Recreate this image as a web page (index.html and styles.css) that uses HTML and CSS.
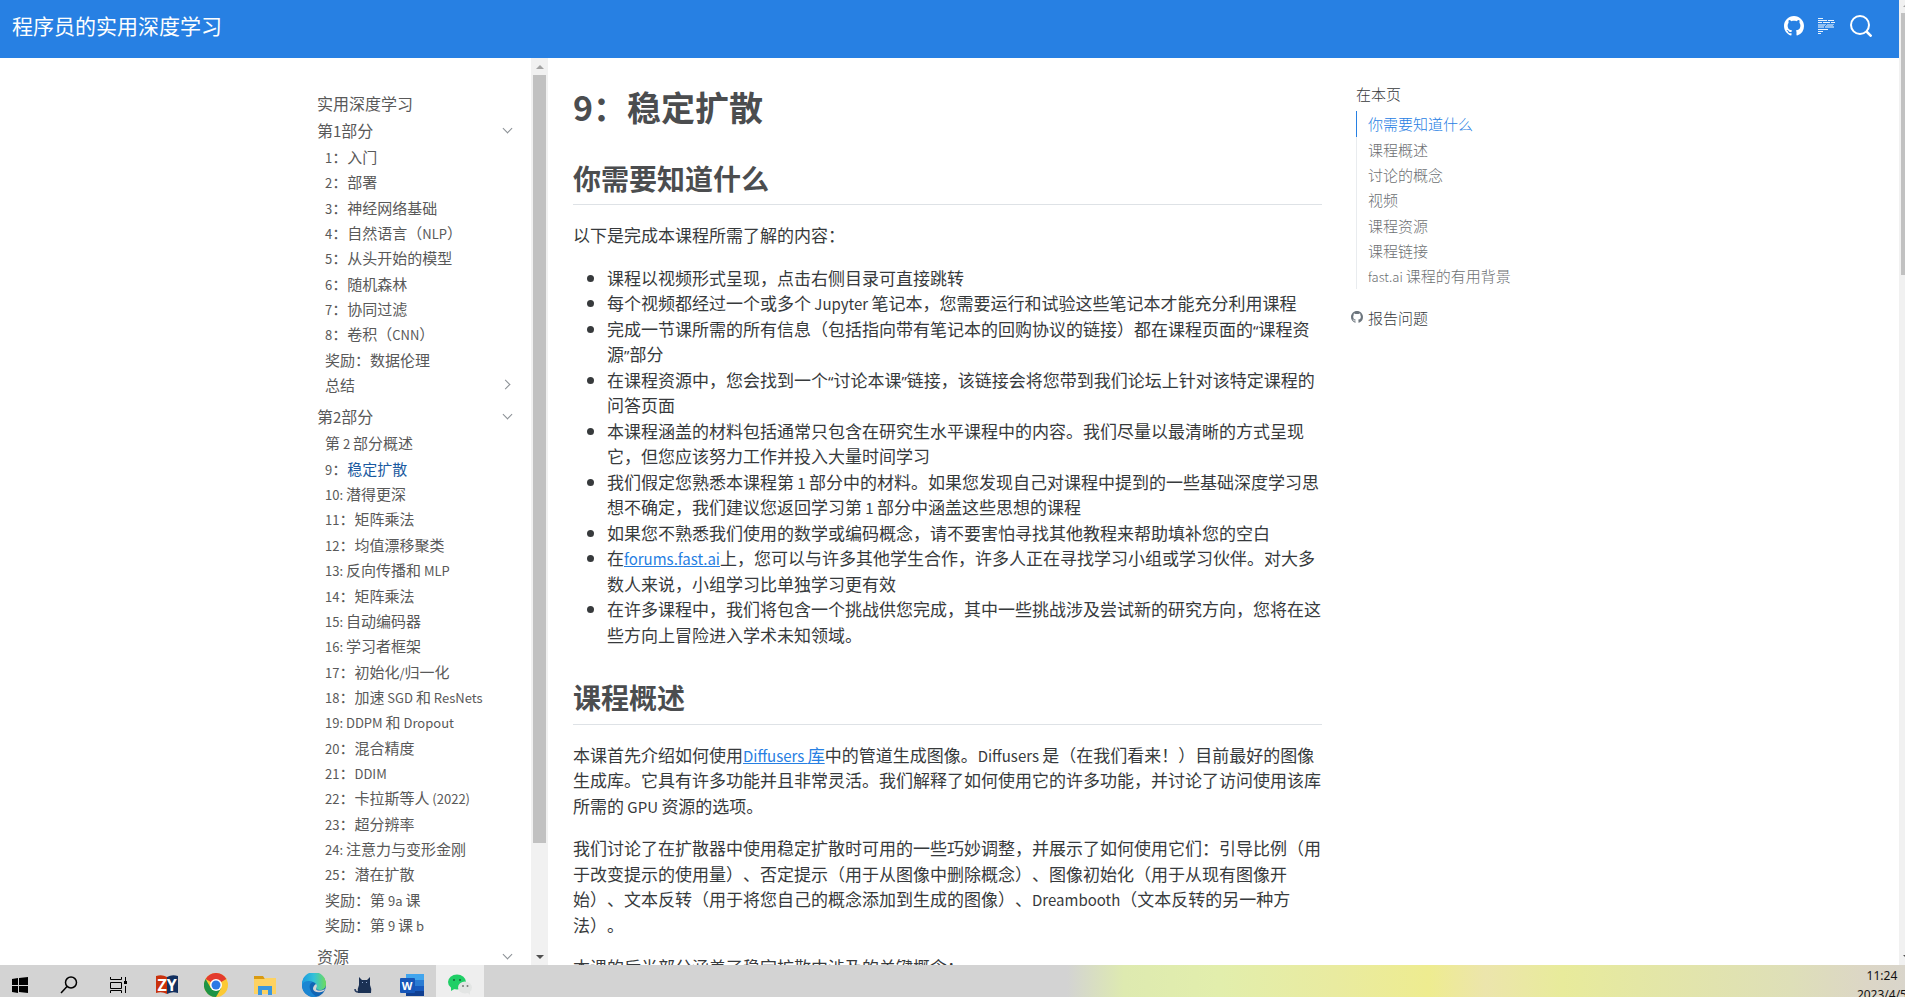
FILE: index.html
```html
<!DOCTYPE html>
<html lang="zh-CN">
<head>
<meta charset="utf-8">
<title>程序员的实用深度学习 - 9：稳定扩散</title>
<link rel="stylesheet" href="styles.css">
</head>
<body>
<div class="viewport">
<div class="page">
<header class="navbar">
  <a class="brand" href="#">程序员的实用深度学习</a>
  <nav class="tools">
    <a href="#" aria-label="GitHub"><svg width="20" height="20" viewBox="0 0 16 16" fill="#fff"><path d="M8 0C3.58 0 0 3.58 0 8c0 3.54 2.29 6.53 5.47 7.59.4.07.55-.17.55-.38 0-.19-.01-.82-.01-1.49-2.01.37-2.53-.49-2.69-.94-.09-.23-.48-.94-.82-1.13-.28-.15-.68-.52-.01-.53.63-.01 1.08.58 1.23.82.72 1.21 1.87.87 2.33.66.07-.52.28-.87.51-1.07-1.78-.2-3.64-.89-3.64-3.95 0-.87.31-1.59.82-2.15-.08-.2-.36-1.02.08-2.12 0 0 .67-.21 2.2.82.64-.18 1.32-.27 2-.27s1.36.09 2 .27c1.53-1.04 2.2-.82 2.2-.82.44 1.1.16 1.92.08 2.12.51.56.82 1.27.82 2.15 0 3.07-1.87 3.75-3.65 3.95.29.25.54.73.54 1.48 0 1.07-.01 1.93-.01 2.2 0 .21.15.46.55.38A8.01 8.01 0 0 0 16 8c0-4.42-3.58-8-8-8"/></svg></a>
    <a href="#" aria-label="论坛"><svg width="18" height="18" viewBox="0 0 18 18" fill="#fff"><path d="M0 1h5v1H0zM0 3h9v1H0zM10 3h6v1h-6zM0 5h4v1H0zM5 5h7v1H5zM13 5h4v1h-4zM0 12h10v1H0zM0 14h5v1H0zM0 16h3v1H0z" opacity=".9"/><path d="M0 7h8v1H0zM9 7h7v1H9zM0 8h7v1H0zM8 8h7v1H8zM0 9h6v2H0zM7 9h9v2H7z" opacity=".5"/></svg></a>
    <button type="button" aria-label="搜索"><svg width="22" height="22" viewBox="0 0 22 22" fill="none" stroke="#fff" stroke-width="2"><circle cx="10" cy="10" r="9"/><path d="M16.500 16.500 21.500 21.500" stroke-width="2.500"/></svg></button>
  </nav>
</header>
<div class="content">
  <nav class="sidebar">
    <div class="menu">
      <a class="top" href="#">实用深度学习</a>
      <button class="top" type="button"><span>第<span class="en">1</span>部分</span><i class="chev"></i></button>
      <ul>
        <li><a href="#"><span class="en">1</span>：入门</a></li>
        <li><a href="#"><span class="en">2</span>：部署</a></li>
        <li><a href="#"><span class="en">3</span>：神经网络基础</a></li>
        <li><a href="#"><span class="en">4</span>：自然语言（<span class="en">NLP</span>）</a></li>
        <li><a href="#"><span class="en">5</span>：从头开始的模型</a></li>
        <li><a href="#"><span class="en">6</span>：随机森林</a></li>
        <li><a href="#"><span class="en">7</span>：协同过滤</a></li>
        <li><a href="#"><span class="en">8</span>：卷积（<span class="en">CNN</span>）</a></li>
        <li><a href="#">奖励：数据伦理</a></li>
        <li><button type="button">总结<i class="chev right"></i></button></li>
      </ul>
      <button class="top" type="button"><span>第<span class="en">2</span>部分</span><i class="chev"></i></button>
      <ul>
        <li><a href="#">第<span class="en"> 2 </span>部分概述</a></li>
        <li><a href="#"><span class="en">9</span>：<span class="current">稳定扩散</span></a></li>
        <li><a href="#"><span class="en">10: </span>潜得更深</a></li>
        <li><a href="#"><span class="en">11</span>：矩阵乘法</a></li>
        <li><a href="#"><span class="en">12</span>：均值漂移聚类</a></li>
        <li><a href="#"><span class="en">13: </span>反向传播和<span class="en"> MLP</span></a></li>
        <li><a href="#"><span class="en">14</span>：矩阵乘法</a></li>
        <li><a href="#"><span class="en">15: </span>自动编码器</a></li>
        <li><a href="#"><span class="en">16: </span>学习者框架</a></li>
        <li><a href="#"><span class="en">17</span>：初始化<span class="en">/</span>归一化</a></li>
        <li><a href="#"><span class="en">18</span>：加速<span class="en"> SGD </span>和<span class="en"> ResNets</span></a></li>
        <li><a href="#"><span class="en">19: DDPM </span>和<span class="en"> Dropout</span></a></li>
        <li><a href="#"><span class="en">20</span>：混合精度</a></li>
        <li><a href="#"><span class="en">21</span>：<span class="en">DDIM</span></a></li>
        <li><a href="#"><span class="en">22</span>：卡拉斯等人<span class="en"> (2022)</span></a></li>
        <li><a href="#"><span class="en">23</span>：超分辨率</a></li>
        <li><a href="#"><span class="en">24: </span>注意力与变形金刚</a></li>
        <li><a href="#"><span class="en">25</span>：潜在扩散</a></li>
        <li><a href="#">奖励：第<span class="en"> 9a </span>课</a></li>
        <li><a href="#">奖励：第<span class="en"> 9 </span>课<span class="en"> b</span></a></li>
      </ul>
      <button class="top" type="button">资源<i class="chev"></i></button>
    </div>
    <div class="scrollbar"><i class="up"></i><div class="track"><div class="thumb long"></div></div><i class="down"></i></div>
  </nav>
  <main class="article">
    <h1>9：稳定扩散</h1>
    <h2>你需要知道什么</h2>
    <p>以下是完成本课程所需了解的内容：</p>
    <ul>
      <li>课程以视频形式呈现，点击右侧目录可直接跳转</li>
      <li>每个视频都经过一个或多个<span class="en"> Jupyter </span>笔记本，您需要运行和试验这些笔记本才能充分利用课程</li>
      <li>完成一节课所需的所有信息（包括指向带有笔记本的回购协议的链接）都在课程页面的<span class="quote">“</span>课程资源<span class="quote">”</span>部分</li>
      <li>在课程资源中，您会找到一个<span class="quote">“</span>讨论本课<span class="quote">”</span>链接，该链接会将您带到我们论坛上针对该特定课程的问答页面</li>
      <li>本课程涵盖的材料包括通常只包含在研究生水平课程中的内容。我们尽量以最清晰的方式呈现它，但您应该努力工作并投入大量时间学习</li>
      <li>我们假定您熟悉本课程第<span class="en"> 1 </span>部分中的材料。如果您发现自己对课程中提到的一些基础深度学习思想不确定，我们建议您返回学习第<span class="en"> 1 </span>部分中涵盖这些思想的课程</li>
      <li>如果您不熟悉我们使用的数学或编码概念，请不要害怕寻找其他教程来帮助填补您的空白</li>
      <li>在<a class="en" href="#">forums.fast.ai</a>上，您可以与许多其他学生合作，许多人正在寻找学习小组或学习伙伴。对大多数人来说，小组学习比单独学习更有效</li>
      <li>在许多课程中，我们将包含一个挑战供您完成，其中一些挑战涉及尝试新的研究方向，您将在这些方向上冒险进入学术未知领域。</li>
    </ul>
    <h2>课程概述</h2>
    <p>本课首先介绍如何使用<a href="#"><span class="en">Diffusers </span>库</a>中的管道生成图像。<span class="en">Diffusers </span>是（在我们看来！）目前最好的图像生成库。它具有许多功能并且非常灵活。我们解释了如何使用它的许多功能，并讨论了访问使用该库所需的<span class="en"> GPU </span>资源的选项。</p>
    <p>我们讨论了在扩散器中使用稳定扩散时可用的一些巧妙调整，并展示了如何使用它们：引导比例（用于改变提示的使用量）、否定提示（用于从图像中删除概念）、图像初始化（用于从现有图像开始）、文本反转（用于将您自己的概念添加到生成的图像）、<span class="en">Dreambooth</span>（文本反转的另一种方法）。</p>
    <p>本课的后半部分涵盖了稳定扩散中涉及的关键概念：</p>
  </main>
  <aside class="toc">
    <h3>在本页</h3>
    <ul>
      <li class="active"><a href="#">你需要知道什么</a></li>
      <li><a href="#">课程概述</a></li>
      <li><a href="#">讨论的概念</a></li>
      <li><a href="#">视频</a></li>
      <li><a href="#">课程资源</a></li>
      <li><a href="#">课程链接</a></li>
      <li><a href="#"><span class="en">fast.ai </span>课程的有用背景</a></li>
    </ul>
    <a class="report" href="#"><svg width="12" height="12" viewBox="0 0 16 16" fill="#6c757d"><path d="M8 0C3.58 0 0 3.58 0 8c0 3.54 2.29 6.53 5.47 7.59.4.07.55-.17.55-.38 0-.19-.01-.82-.01-1.49-2.01.37-2.53-.49-2.69-.94-.09-.23-.48-.94-.82-1.13-.28-.15-.68-.52-.01-.53.63-.01 1.08.58 1.23.82.72 1.21 1.87.87 2.33.66.07-.52.28-.87.51-1.07-1.78-.2-3.64-.89-3.64-3.95 0-.87.31-1.59.82-2.15-.08-.2-.36-1.02.08-2.12 0 0 .67-.21 2.2.82.64-.18 1.32-.27 2-.27s1.36.09 2 .27c1.53-1.04 2.2-.82 2.2-.82.44 1.1.16 1.92.08 2.12.51.56.82 1.27.82 2.15 0 3.07-1.87 3.75-3.65 3.95.29.25.54.73.54 1.48 0 1.07-.01 1.93-.01 2.2 0 .21.15.46.55.38A8.01 8.01 0 0 0 16 8c0-4.42-3.58-8-8-8"/></svg>报告问题</a>
  </aside>
</div>
</div>
<div class="scrollbar edge"><i class="up"></i><div class="track"><div class="thumb short"></div></div><i class="down"></i></div>
</div>
<footer class="taskbar">
  <div class="apps">
    <button type="button" aria-label="开始"><svg width="24" height="24" viewBox="0 0 24 24"><path d="M4 6l6-1v7H4zM11 5l9-1v8h-9zM4 13h6v7l-6-1zM11 13h9v7l-9-1z"/></svg></button>
    <button type="button" aria-label="搜索"><svg width="24" height="24" viewBox="0 0 24 24" fill="none" stroke="#000" stroke-width="1.500"><circle cx="14" cy="9.500" r="5.500"/><path d="M10 13.500 4 20"/></svg></button>
    <button type="button" aria-label="任务视图"><svg width="24" height="24" viewBox="0 0 24 24" fill="none" stroke="#000"><path d="M4.500 4v2.500h11V4M4.500 9.500h11v6h-11zM4.500 20v-2.500h11V20M19.500 4v4M19.500 13v7"/><path d="M18 8h3v3h-3z" fill="#000" stroke="none"/></svg></button>
    <button type="button" aria-label="ZY"><svg width="24" height="24" viewBox="0 0 24 24"><path d="M1 3Q7 1 12 4v17Q7 18 1 20z" fill="#c9310c"/><path d="M12 4q5-3 11-1v17q-6-2-11 1z" fill="#12305f"/><text x="12" y="18" text-anchor="middle" class="zy">ZY</text></svg></button>
    <button type="button" aria-label="Chrome"><svg width="24" height="24" viewBox="0 0 24 24"><circle cx="12" cy="12" r="12" fill="#fcc934"/><path d="M12 12 1.600 6A12 12 0 0 1 22.400 6z" fill="#e33b2e"/><path d="M1.600 6A12 12 0 0 0 12 24l5.200-9L12 12 6.800 15z" fill="#1e9445"/><circle cx="12" cy="12" r="6" fill="#fff"/><circle cx="12" cy="12" r="4.500" fill="#2a78e4"/></svg></button>
    <button type="button" aria-label="文件资源管理器"><svg width="24" height="24" viewBox="0 0 24 24"><path d="M1 3h9l2 3H1z" fill="#d99a12"/><path d="M1 6h10l2-1h10v16H1z" fill="#fdd262"/><path d="M5 22v-9h14v9h-4v-5H9v5z" fill="#3b97dd"/></svg></button>
    <button type="button" aria-label="Edge"><svg width="24" height="24" viewBox="0 0 24 24"><defs><linearGradient id="eg" x1="0" x2="1"><stop offset="0" stop-color="#1a9be0"/><stop offset=".5" stop-color="#35c1d8"/><stop offset="1" stop-color="#6fdc5a"/></linearGradient></defs><circle cx="12" cy="12" r="12" fill="#1165b4"/><path d="M0 11A12 12 0 0 1 24 11c0 4-3 6-6 6-3 0-4-1-4-2 1-1 1-5-3-6C6 8 1 10 0 14z" fill="url(#eg)"/><path d="M0 12c1-4 7-5 11-3-3 1-4 4-3 7 1 4 4 6 7 8C7 25 0 20 0 12z" fill="#1b86d2"/><path d="M14 11c2 2 0 4 0 5 1 2 5 2 9 0l-1 2c-4 2-10 2-11-2 0-2 1-4 3-5z" fill="#d5d5d5"/></svg></button>
    <button type="button" aria-label="黑猫"><svg width="24" height="24" viewBox="0 0 24 24"><path d="M7 19c-2 0-3-1-3-3" fill="none" stroke="#2b3e60" stroke-width="1.500"/><path d="M8 4l3 3h5l3-3v8q2 4 1 8H7q-1-4 1-8z" fill="#1b3154"/><path d="M11 9h1v1h-1zM15 9h1v1h-1z" fill="#8fa8cf"/></svg></button>
    <button type="button" aria-label="Word"><svg width="24" height="24" viewBox="0 0 24 24"><path d="M6 1h18v6H6z" fill="#41a5ee"/><path d="M6 7h18v6H6z" fill="#2b7cd3"/><path d="M6 13h18v5H6z" fill="#185abd"/><path d="M6 18h18v5H6z" fill="#103f91"/><rect y="5" width="15" height="15" rx="1" fill="#1656b8"/><text x="7" y="17" text-anchor="middle" class="word">W</text></svg></button>
    <button class="running" type="button" aria-label="微信"><svg width="24" height="24" viewBox="0 0 24 24"><ellipse cx="9" cy="9" rx="9" ry="7.500" fill="#1fcf66"/><path d="M3 13v5l5-3z" fill="#1fcf66"/><circle cx="6" cy="7" r="1" fill="#17643a"/><circle cx="12" cy="7" r="1" fill="#17643a"/><ellipse cx="17" cy="14.500" rx="7" ry="6" fill="#e3e5e4"/><path d="M19 19l3 3v-5z" fill="#e3e5e4"/><circle cx="15" cy="13" r="1" fill="#777"/><circle cx="19.500" cy="13" r="1" fill="#777"/></svg></button>
  </div>
  <div class="clock"><time>11:24</time><time>2023/4/5</time></div>
</footer>
</body>
</html>
```
FILE: styles.css
```css
* { box-sizing: border-box; }
body {
  margin: 0;
  height: 100vh;
  display: flex;
  flex-direction: column;
  overflow: hidden;
  background: #fff;
  color: #373a3c;
  font-family: "Noto Sans CJK SC", sans-serif;
  font-size: 17px;
  line-height: 1.5;
  text-spacing-trim: space-all;
}
a { color: inherit; text-decoration: none; }
button {
  border: 0;
  padding: 0;
  background: none;
  color: inherit;
  font: inherit;
  text-align: left;
}
svg { display: block; }
ul { margin: 0; padding: 0; list-style: none; }

.viewport { flex: 1; min-height: 0; display: flex; }
.page { flex: 1; min-width: 0; display: flex; flex-direction: column; }

.navbar {
  flex: none;
  height: 58px;
  padding: 0 27px 6px 12px;
  display: flex;
  align-items: center;
  justify-content: space-between;
  background: #2780e3;
}
.brand { color: #fdfefe; font-size: 21px; }
.tools { display: flex; align-items: center; gap: 14px; }

.content {
  flex: 1;
  min-height: 0;
  overflow: hidden;
  display: grid;
  grid-template-columns: 231px minmax(0, 774px) 260px;
  grid-template-rows: 100%;
  justify-content: center;
}
.sidebar { display: flex; color: #595959; overflow: hidden; }
.menu { flex: 1; padding: 32px 18px 0 0; }
.menu a, .menu button { display: block; width: 100%; white-space: pre; }
.menu button { display: flex; justify-content: space-between; align-items: center; }
.menu .top { font-size: 16px; line-height: 27px; }
.menu ul { padding-left: 8px; font-size: 15px; line-height: 1.69; margin-bottom: 6px; }
.menu .en, .toc .en { font-size: 13px; line-height: 1; }
.menu .top .en { font-size: 15px; }
.current { color: #1b5aa0; }
.chev {
  width: 7px;
  height: 7px;
  margin: 0 2px 4px 0;
  border: solid #8a8f94;
  border-width: 0 1px 1px 0;
  transform: rotate(45deg);
}
.chev.right { margin: 0 4px 0 0; transform: rotate(-45deg); }

.scrollbar {
  flex: none;
  width: 17px;
  display: flex;
  flex-direction: column;
  align-items: center;
  background: #f1f1f1;
}
.scrollbar i { border: 4px solid transparent; }
.scrollbar .up { border-bottom-color: #a3a3a3; border-top-width: 3px; height: 11px; margin-bottom: 6px; }
.scrollbar .down { border-top-color: #505050; height: 8px; margin: 7px 0 2px; }
.track { flex: 1; width: 100%; padding: 0 2px; }
.thumb { height: 88%; background: #c1c1c1; }
.edge { width: 6px; align-items: flex-start; overflow: hidden; }
.edge .track { padding-right: 0; }
.edge .up, .edge .down { margin-left: 4px; }
.edge .up { height: 7px; border-top-width: 2px; }
.edge .short { height: 28%; }

.article { padding: 29px 0 0 25px; }
.article h1 { margin: 0; font-size: 34px; line-height: 1.2; color: #4b4d4f; }
.article h2 {
  margin: 34px 0 17px;
  padding-bottom: 9px;
  border-bottom: 1px solid #dee2e6;
  font-size: 28px;
  line-height: 1.2;
  color: #4b4d4f;
}
.article p { margin: 0 0 17px; }
.article ul { padding-left: 34px; list-style: disc; }
.article a { color: #2780e3; text-decoration: underline; }
.article .en { font-size: 15px; line-height: 1; }
.quote { font-family: "Noto Sans", sans-serif; font-size: 15px; line-height: 1; }

.toc { padding: 23px 0 0 34px; font-size: 15px; line-height: 1.69; font-weight: 300; }
.toc h3 { margin: 0 0 5px; font-size: 15px; font-weight: 300; }
.toc li { padding-left: 11px; border-left: 1px solid #e9ecef; color: #6c6f72; }
.toc .active { border-color: #2780e3; color: #2780e3; }
.report { display: flex; align-items: center; gap: 5px; margin: 16px 0 0 -5px; }

.taskbar {
  flex: none;
  height: 32px;
  display: flex;
  justify-content: space-between;
  overflow: hidden;
  background: linear-gradient(90deg, #d3d3d3 0 56%, #deeab0 59%, #e2eeac 64%, #e9eba0 70%, #eeec90 75%, #ece5ac 78%, #e8eb9b 82%, #e4e7a5 86%, #dedfb8 94%, #dcd6c6 98%, #d9d5cb);
}
.apps { display: flex; margin-left: -5px; }
.apps button { width: 49px; padding-top: 8px; display: flex; justify-content: center; }
.apps button svg { flex: none; }
.apps .running { width: 48px; background: #eeeeee; }
.zy { font: bold 16px "Open Sans", sans-serif; fill: #fff; }
.word { font: bold 11px "Open Sans", sans-serif; fill: #fff; }
.clock {
  display: flex;
  flex-direction: column;
  align-items: center;
  padding-top: 1px;
  margin-right: -2px;
  color: #111;
  font: 12px/19px "Noto Sans", sans-serif;
}
```
